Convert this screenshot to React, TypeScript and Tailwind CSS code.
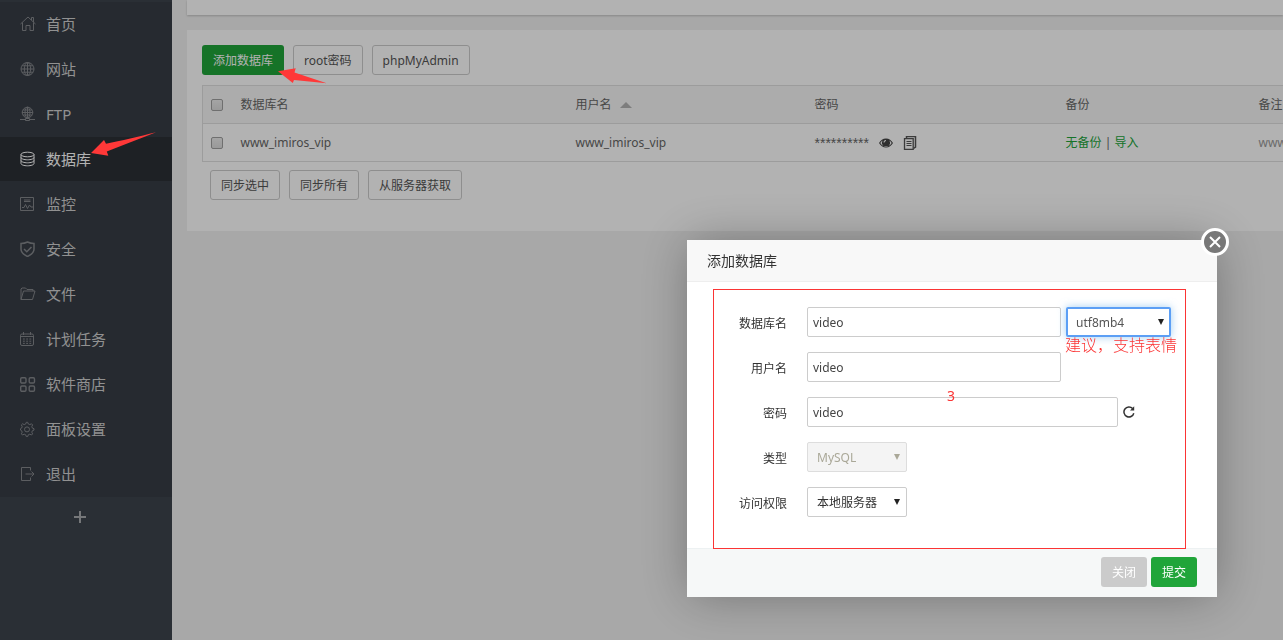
import type { ReactNode } from "react";

const menuItems: { label: string; icon: ReactNode; active?: boolean }[] = [
  {
    label: "首页",
    icon: <path d="M.5 8 8 1l7.5 7M2.5 6.500v8h3.500V9.500h4v5h3.500v-8M11.500 4V1.500h2V6" />,
  },
  {
    label: "网站",
    icon: (
      <>
        <circle cx="7.500" cy="8" r="6.500" />
        <ellipse cx="7.500" cy="8" rx="3.200" ry="6.500" />
        <path d="M7.500 1.500v13M1 8h13M2 4.800h11M2 11.200h11" />
      </>
    ),
  },
  {
    label: "FTP",
    icon: (
      <>
        <circle cx="7.500" cy="6.500" r="5.300" />
        <ellipse cx="7.500" cy="6.500" rx="2.500" ry="5.300" />
        <path d="M7.500 1v12M2 6.500h11M3 4h9M3 9h9M0 13.500h5.500M9.500 13.500H15" />
        <path d="M5.500 12.500h4v2h-4z" />
      </>
    ),
  },
  {
    label: "数据库",
    active: true,
    icon: (
      <>
        <ellipse cx="7.500" cy="3.500" rx="6.500" ry="2.300" />
        <path d="M1 3.500v9c0 1.300 3 2.300 6.500 2.300S14 13.800 14 12.500v-9M1 6.500c0 1.300 3 2.300 6.500 2.300S14 7.800 14 6.500M1 9.500c0 1.300 3 2.300 6.500 2.300S14 10.800 14 9.500" />
      </>
    ),
  },
  {
    label: "监控",
    icon: (
      <>
        <path d="M.5 1.500h13v13H.5zM4 4h6.500M4 5.500h6.500" />
        <path d="M2 11.500h2l1.500-3 2 4L9.500 9l1.500 2h2" />
      </>
    ),
  },
  {
    label: "安全",
    icon: (
      <g strokeWidth="1.500">
        <path d="M7.500 1C5.500 2 3 2.500 1 2.500v5.800c0 3.300 3.500 5.700 6.500 7.200 3-1.500 6.500-3.900 6.500-7.200V2.500C12 2.500 9.500 2 7.500 1z" />
        <path d="m4 8 2.800 2.800L11.500 6" />
      </g>
    ),
  },
  {
    label: "文件",
    icon: <path d="M1 13.500V3l1-1h3.500L7 3.500h6V5M1 13.500h11.500L15 5H3.500L1 13.500z" />,
  },
  {
    label: "计划任务",
    icon: (
      <>
        <rect x=".5" y="3" width="13" height="11.500" rx="1.500" />
        <path d="M3.500 1v3M10.500 1v3M1 5.500h12" />
        <path d="M3 8h8.500M3 10.200h8.500M3 12.400h8.500" strokeDasharray="1.800 1.400" />
      </>
    ),
  },
  {
    label: "软件商店",
    icon: (
      <g strokeWidth="1.400">
        <rect x=".7" y="1.700" width="5.300" height="5.300" rx="1.200" />
        <rect x="9.200" y="1.700" width="5.300" height="5.300" rx="1.200" />
        <rect x=".7" y="10" width="5.300" height="5.300" rx="1.200" />
        <rect x="9.200" y="10" width="5.300" height="5.300" rx="1.200" />
      </g>
    ),
  },
  {
    label: "面板设置",
    icon: (
      <>
        <path d="M6.300 1.300h1.400l.6 1.700 1.500.6 1.700-.8 1.100 1.100-.8 1.700.6 1.500 1.600.6v1.400l-1.600.6-.6 1.500.8 1.700-1.100 1.100-1.700-.8-1.500.6-.6 1.700H6.300l-.6-1.700-1.500-.6-1.700.8-1.100-1.100.8-1.700-.6-1.500L.5 9.100V7.700l1.100-.6.6-1.500-.8-1.700 1.100-1.100 1.700.8 1.500-.6z" />
        <circle cx="7" cy="8.400" r="2.500" />
      </>
    ),
  },
  {
    label: "退出",
    icon: <path d="M10.500 4.500v-3h-9v13h9v-3M5.500 8H14M11.500 5.500 14 8l-2.500 2.500" />,
  },
];

function Sidebar() {
  return (
    <nav className="w-[172px] flex-none bg-[#3d444d] pt-0.5">
      <ul className="bg-[#373d46]">
        {menuItems.map((item) => (
          <li key={item.label} className="pb-px">
            <a
              href="#"
              className={`flex h-11 items-center gap-2.5 pl-5 text-[15px] ${
                item.active ? "bg-[#2c3036] text-white" : "text-[#d0d0d0]"
              }`}
            >
              <svg
                viewBox="0 0 16 16"
                fill="none"
                stroke="currentColor"
                className={`size-4 ${item.active ? "" : "opacity-50"}`}
              >
                {item.icon}
              </svg>
              <span className="pb-px">{item.label}</span>
            </a>
          </li>
        ))}
      </ul>
      <button type="button" aria-label="+" className="flex h-10 w-[160px] items-center justify-center text-[#a8abae]">
        <svg viewBox="0 0 14 14" stroke="currentColor" strokeWidth="2" className="size-3.5">
          <path d="M7 1v12M1 7h12" />
        </svg>
      </button>
    </nav>
  );
}

function PlainButton({ children }: { children: ReactNode }) {
  return (
    <button type="button" className="h-[30px] rounded-[3px] border border-[#ccc] bg-white px-2.5 pt-px text-[#555]">
      {children}
    </button>
  );
}

function Check({ label }: { label: string }) {
  return (
    <input
      type="checkbox"
      aria-label={label}
      className="block size-3 appearance-none rounded-[2px] border border-[#a0a0a0] bg-linear-to-b from-[#ececec] to-[#dcdcdc]"
    />
  );
}

function DatabaseTable() {
  return (
    <table className="mt-2.5 w-full min-w-[1220px] table-fixed border-collapse border border-[#e0e0e0] text-left text-[#666]">
      <colgroup>
        <col className="w-[30px]" />
        <col className="w-[335px]" />
        <col className="w-[239px]" />
        <col className="w-[251px]" />
        <col className="w-[193px]" />
        <col />
      </colgroup>
      <thead>
        <tr className="h-[38px] border-b border-[#e0e0e0] bg-[#f6f6f6] [&>th]:px-2 [&>th]:font-normal">
          <th>
            <Check label="全选" />
          </th>
          <th>数据库名</th>
          <th>
            <span className="flex items-center gap-2">
              用户名
              <svg viewBox="0 0 12 6" className="h-1.5 w-3 fill-[#b4b4b4]">
                <path d="M0 6 6 0l6 6z" />
              </svg>
            </span>
          </th>
          <th>密码</th>
          <th>备份</th>
          <th>备注</th>
        </tr>
      </thead>
      <tbody>
        <tr className="h-[38px] [&>td]:px-2">
          <td>
            <Check label="www_imiros_vip" />
          </td>
          <td>www_imiros_vip</td>
          <td>www_imiros_vip</td>
          <td>
            <div className="flex items-center gap-2.5">
              <span className="font-['Liberation_Sans',sans-serif] text-sm leading-4">**********</span>
              <svg viewBox="0 0 14 14" className="size-3.5 flex-none">
                <path
                  fillRule="evenodd"
                  d="M0 7c1.500-2.700 4-4.500 7-4.500S12.500 4.300 14 7c-1.500 2.700-4 4.500-7 4.500S1.500 9.700 0 7zm1.300 0C2.500 9.200 4.700 10.400 7 10.400S11.500 9.200 12.700 7c-.6-1-1.400-1.900-2.400-2.500a4 4 0 1 1-6.600 0C2.700 5.100 1.900 6 1.300 7zM7 4.100v1A1.500 1.500 0 0 0 5.500 6.600h-1A2.500 2.500 0 0 1 7 4.100z"
                  fill="#444"
                />
              </svg>
              <svg viewBox="0 0 14 14" fill="none" stroke="#555" className="size-3.5 flex-none">
                <path d="M3.500 2.500v-2h9v10.500l-2 1.500" strokeWidth="1.500" />
                <path d="M1.500 2.700h8.700v10.600H1.500z" strokeWidth="1.300" />
                <path d="M3.500 5.500h5M3.500 7.500h5M3.500 9.500h5" />
              </svg>
            </div>
          </td>
          <td>
            <a href="#" className="text-[#20a53a]">
              无备份
            </a>
            {" | "}
            <a href="#" className="text-[#20a53a]">
              导入
            </a>
          </td>
          <td className="text-[#999]">www_imiros_vip</td>
        </tr>
      </tbody>
    </table>
  );
}

function SelectBox({
  id,
  value,
  width,
  look,
  disabled,
}: {
  id: string;
  value: string;
  width: string;
  look: string;
  disabled?: boolean;
}) {
  return (
    <div className={`relative ${width}`}>
      <select
        id={id}
        aria-label={value}
        disabled={disabled}
        className={`block h-[30px] w-full appearance-none rounded-[2px] pt-px opacity-100 outline-none ${look}`}
      >
        <option>{value}</option>
      </select>
      <svg
        viewBox="0 0 6 6"
        className={`pointer-events-none absolute top-3 right-[7px] size-1.5 ${disabled ? "fill-[#aaa898]" : "fill-[#222]"}`}
      >
        <path d="M0 0h6L3 6z" />
      </svg>
    </div>
  );
}

function Field({ id, label, children }: { id: string; label: string; children: ReactNode }) {
  return (
    <div className="flex items-center gap-5">
      <label htmlFor={id} className="w-[100px] flex-none pt-[3px] text-right text-[#333]">
        {label}
      </label>
      <div className="flex items-center gap-[5px]">{children}</div>
    </div>
  );
}

const inputClass = "h-[30px] rounded-[2px] border border-[#ccc] bg-white px-[5px] text-[#444] outline-none";

function AddDatabaseDialog() {
  return (
    <div
      role="dialog"
      aria-labelledby="dialog-title"
      className="relative w-[530px] rounded-[2px] bg-white shadow-[1px_1px_50px_rgba(0,0,0,0.3)]"
    >
      <h2 id="dialog-title" className="border-b border-[#eee] bg-[#f8f8f8] px-5 text-sm leading-[41px] text-[#333]">
        添加数据库
      </h2>
      <button
        type="button"
        aria-label="close"
        className="absolute -top-3 -right-3 flex size-7 items-center justify-center rounded-full border-3 border-white bg-[#787878]"
      >
        <svg viewBox="0 0 12 12" stroke="#fff" strokeWidth="2" className="size-3">
          <path d="m1 1 10 10M11 1 1 11" />
        </svg>
      </button>

      <form className="relative flex flex-col gap-[15px] pt-[25px] pb-[31px]">
        <Field id="db-name" label="数据库名">
          <input id="db-name" defaultValue="video" className={`w-[254px] ${inputClass}`} />
          <SelectBox
            id="charset"
            value="utf8mb4"
            width="w-[105px]"
            look="border-2 border-[#5c9ff5] bg-white px-2 text-[#555] shadow-[0_0_8px_rgba(102,175,233,0.6)]"
          />
        </Field>
        <Field id="db-user" label="用户名">
          <input id="db-user" defaultValue="video" className={`w-[254px] ${inputClass}`} />
        </Field>
        <Field id="db-password" label="密码">
          <input id="db-password" defaultValue="video" className={`w-[311px] ${inputClass}`} />
          <button type="button" aria-label="refresh">
            <svg viewBox="0 0 12 12" fill="none" stroke="#333" strokeWidth="1.500" className="size-3">
              <path d="M10.800 7.200A5 5 0 1 1 9.600 2.500" />
              <path d="M11.200.3v4.200H7z" fill="#333" stroke="none" />
            </svg>
          </button>
        </Field>
        <Field id="db-type" label="类型">
          <SelectBox
            id="db-type"
            value="MySQL"
            width="w-[100px]"
            look="border border-[#ddd] bg-[#f4f4f4] px-[9px] text-[#aaa898]"
            disabled
          />
        </Field>
        <Field id="db-access" label="访问权限">
          <SelectBox
            id="db-access"
            value="本地服务器"
            width="w-[100px]"
            look="border border-[#ccc] bg-white px-[9px] text-[#333]"
          />
        </Field>

        {/* red notes over the form */}
        <div className="pointer-events-none absolute top-[7px] right-[31px] -bottom-px left-[26px] z-10 border border-[#fb3434]" />
        <span className="pointer-events-none absolute top-[51px] left-[378px] text-base font-light whitespace-nowrap text-[#fb3434]">
          建议，支持表情
        </span>
        <span className="pointer-events-none absolute top-[104px] left-[260px] text-sm text-[#fb3434]">3</span>
      </form>

      <div className="flex justify-end gap-1 border-t border-[#edf1f2] bg-[#f6f8f8] px-5 pt-2 pb-2.5 text-white">
        <button type="button" className="h-[30px] rounded-[3px] bg-[#cbcbcb] px-[11px] pt-px">
          关闭
        </button>
        <button type="submit" className="h-[30px] rounded-[3px] bg-[#20a53a] px-[11px] pt-px">
          提交
        </button>
      </div>
    </div>
  );
}

export default function App() {
  return (
    <div className="relative flex min-h-screen overflow-hidden bg-[#f1f1f1] font-['Noto_Sans','Noto_Sans_CJK_SC',sans-serif] text-xs">
      <Sidebar />

      <main className="min-w-0 flex-1 overflow-hidden pl-[15px]">
        <div className="h-[15px] bg-white shadow-[0_1px_2px_rgba(0,0,0,0.2)]" />
        <section className="mt-[15px] overflow-hidden bg-white pt-[15px] pb-[31px] pl-[15px]">
          <div className="flex gap-[9px]">
            <button type="button" className="h-[30px] rounded-[3px] bg-[#20a53a] px-[11px] pt-px text-white">
              添加数据库
            </button>
            <PlainButton>root密码</PlainButton>
            <PlainButton>phpMyAdmin</PlainButton>
          </div>
          <DatabaseTable />
          <div className="mt-2 flex gap-[9px] pl-2">
            <PlainButton>同步选中</PlainButton>
            <PlainButton>同步所有</PlainButton>
            <PlainButton>从服务器获取</PlainButton>
          </div>
        </section>
      </main>

      <div className="fixed inset-0 flex items-start justify-end bg-black/30 pt-60 pr-[66px]">
        <AddDatabaseDialog />
      </div>

      <svg viewBox="0 0 66 25" className="pointer-events-none absolute top-[132px] left-[91px] h-[25px] w-[66px] fill-[#ff3838]">
        <path d="M0 21 13 8l2 3.700C30 9 48 4.500 65 .300 48 7 32 13 15.800 19.500l1.500 4.200z" />
      </svg>
      <svg viewBox="0 0 49 16" className="pointer-events-none absolute top-[68px] left-[278px] h-4 w-[49px] fill-[#ff3838]">
        <path d="M0 3.300 17.700.300 16.500 4.500 48.700 15.300 16 12l-1.200 3z" />
      </svg>
    </div>
  );
}
